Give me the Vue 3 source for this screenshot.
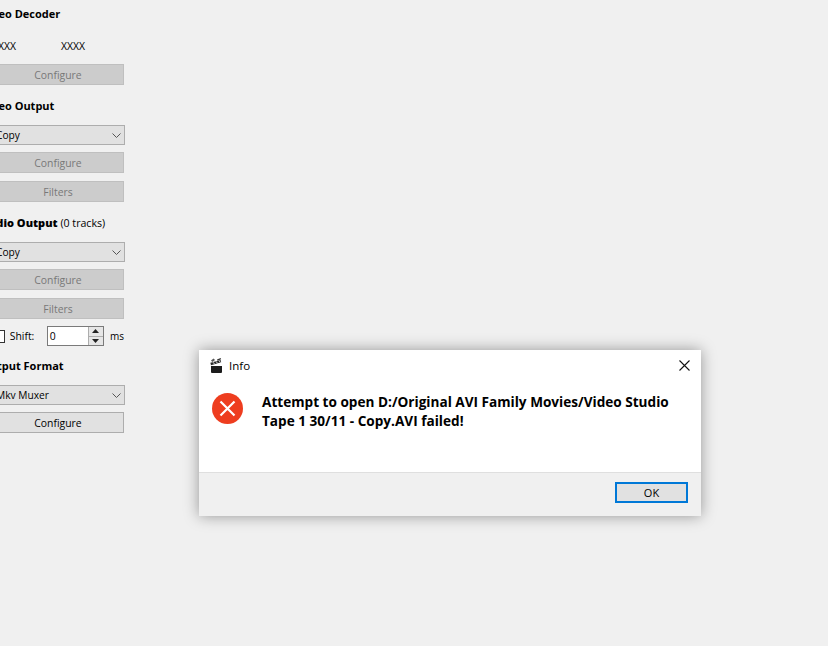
<template>
  <div class="page">
    <aside class="side">
      <h3 class="head first">Video Decoder</h3>
      <div class="codec">
        <span>XXXX</span>
        <span>XXXX</span>
      </div>
      <button class="btn off gap-codec">Configure</button>

      <h3 class="head">Video Output</h3>
      <div class="combo">
        <span>Copy</span>
        <svg width="9" height="5" viewBox="0 0 9 5"><path d="M.5.5l4 4 4-4" fill="none" stroke="#555" /></svg>
      </div>
      <button class="btn off gap-s">Configure</button>
      <button class="btn off gap-m">Filters</button>

      <h3 class="head"><b>Audio Output</b> <span class="plain">(0 tracks)</span></h3>
      <div class="combo">
        <span>Copy</span>
        <svg width="9" height="5" viewBox="0 0 9 5"><path d="M.5.5l4 4 4-4" fill="none" stroke="#555" /></svg>
      </div>
      <button class="btn off gap-s">Configure</button>
      <button class="btn off gap-m">Filters</button>

      <div class="shift">
        <span class="check"></span>
        <span class="shift-label">Shift:</span>
        <div class="spin">
          <span class="spin-val">0</span>
          <div class="spin-btns">
            <span class="arrow"><svg width="7" height="4" viewBox="0 0 7 4"><path d="M3.5 0 7 4H0z" fill="#222" /></svg></span>
            <span class="arrow"><svg width="7" height="4" viewBox="0 0 7 4"><path d="M0 0h7L3.5 4z" fill="#222" /></svg></span>
          </div>
        </div>
        <span class="unit">ms</span>
      </div>

      <h3 class="head last">Output Format</h3>
      <div class="combo">
        <span>Mkv Muxer</span>
        <svg width="9" height="5" viewBox="0 0 9 5"><path d="M.5.5l4 4 4-4" fill="none" stroke="#555" /></svg>
      </div>
      <button class="btn gap-s">Configure</button>
    </aside>

    <div class="dialog">
      <div class="titlebar">
        <svg class="app-icon" width="13" height="15" viewBox="0 0 13 15">
          <path d="M1 8h11v6a1 1 0 0 1-1 1H2a1 1 0 0 1-1-1z" fill="#1c1c1c" />
          <path d="M.4 4.8 10.6 2l.6 2.2L1 7.2z" fill="#2a2a2a" />
          <path d="M3 4.2 4.6 6.2M6 3.4 7.6 5.4M9 2.6 10.4 4.4" stroke="#e2e2e2" stroke-width="1" fill="none" />
          <path d="M1 2.6 3.6.6 5 2 2.4 4z" fill="#555" />
          <path d="M7 1.6 10.6 0l.5 1.2-3.6 1.5z" fill="#333" />
        </svg>
        <span class="title">Info</span>
        <svg class="close" width="11" height="11" viewBox="0 0 11 11"><path d="M.5.5l10 10M10.5.5l-10 10" stroke="#111" stroke-width="1.1" fill="none" /></svg>
      </div>
      <div class="body">
        <svg class="err" width="31" height="31" viewBox="0 0 31 31">
          <circle cx="15.5" cy="15.5" r="15.5" fill="#ee3d1f" />
          <path d="M8.5 8.5l14 14M22.5 8.5l-14 14" stroke="#fff" stroke-width="2.2" fill="none" />
        </svg>
        <p class="msg">Attempt to open D:/Original AVI Family Movies/Video Studio Tape 1 30/11 - Copy.AVI failed!</p>
      </div>
      <div class="foot">
        <button class="ok">OK</button>
      </div>
    </div>
  </div>
</template>

<script setup>
</script>

<style>
html,
body {
  margin: 0;
  background: #f0f0f0;
}
</style>

<style scoped>
.page {
  position: relative;
  width: 828px;
  height: 646px;
  overflow: hidden;
  background: #f0f0f0;
  font-family: "Open Sans", "Noto Sans", sans-serif;
  font-size: 10.4px;
  color: #000;
}

.side {
  display: flex;
  flex-direction: column;
  width: 132px;
  margin-left: -8px;
}

.head {
  margin: 13px 0 11px -11px;
  height: 16px;
  line-height: 16px;
  font-size: 11px;
  font-weight: 700;
  white-space: nowrap;
}

.head.first {
  margin-top: 6px;
  margin-bottom: 0;
}

.head.last {
  margin-top: 12px;
}

.plain {
  font-size: 10.6px;
  font-weight: 400;
}

.codec {
  display: flex;
  gap: 45px;
  height: 16px;
  line-height: 16px;
  margin-top: 16px;
}

.btn {
  display: block;
  width: 132px;
  height: 21px;
  padding: 0;
  border: 1px solid #adadad;
  background: #e1e1e1;
  font: inherit;
  color: #000;
  text-align: center;
}

.btn.off {
  background: #cccccc;
  border-color: #bfbfbf;
  color: #787878;
}

.gap-codec {
  margin-top: 10px;
}

.gap-s {
  margin-top: 7px;
}

.gap-m {
  margin-top: 8px;
}

.combo {
  display: flex;
  align-items: center;
  justify-content: space-between;
  box-sizing: border-box;
  width: 133px;
  height: 20px;
  padding: 0 3px 0 3px;
  border: 1px solid #adadad;
  background: #e1e1e1;
  font-size: 10.2px;
}

.shift {
  display: flex;
  align-items: center;
  height: 20px;
  margin-top: 7px;
}

.check {
  box-sizing: border-box;
  width: 13px;
  height: 13px;
  border: 1px solid #333;
  background: #fff;
}

.shift-label {
  width: 37px;
  margin-left: 5px;
}

.spin {
  display: flex;
  box-sizing: border-box;
  width: 59px;
  height: 20px;
  margin-left: 1px;
  border: 1px solid #7a7a7a;
  background: #fff;
}

.spin-val {
  flex: 1;
  padding-left: 2px;
  line-height: 19px;
}

.spin-btns {
  display: flex;
  flex-direction: column;
  width: 15px;
}

.arrow {
  display: flex;
  flex: 1;
  align-items: center;
  justify-content: center;
  background: #e6e6e6;
  border: 1px solid #adadad;
  border-width: 0 0 1px 1px;
}

.arrow:last-child {
  border-bottom: 0;
}

.unit {
  margin-left: 6px;
  font-size: 10px;
}

.dialog {
  position: absolute;
  left: 199px;
  top: 350px;
  display: flex;
  flex-direction: column;
  width: 502px;
  height: 166px;
  background: #fff;
  box-shadow: 0 0 14px rgba(0, 0, 0, 0.38);
}

.titlebar {
  display: flex;
  align-items: center;
  height: 31px;
  padding: 0 11px;
}

.app-icon {
  margin-top: -1px;
}

.title {
  margin-left: 6px;
  font-size: 11.5px;
}

.close {
  margin-left: auto;
}

.body {
  flex: 1;
  display: flex;
  padding: 12px 12px 0 13px;
}

.err {
  flex: none;
}

.msg {
  width: 430px;
  margin: -1px 0 0 19px;
  font-size: 13.6px;
  font-weight: 700;
  line-height: 19px;
}

.foot {
  display: flex;
  justify-content: flex-end;
  box-sizing: border-box;
  height: 44px;
  padding: 9px 13px 0 0;
  background: #f0f0f0;
  border-top: 1px solid #dfdfdf;
}

.ok {
  box-sizing: border-box;
  width: 73px;
  height: 21px;
  padding: 0;
  border: 2px solid #0078d7;
  background: #e1e1e1;
  font: inherit;
  font-size: 11px;
  color: #000;
}
</style>
